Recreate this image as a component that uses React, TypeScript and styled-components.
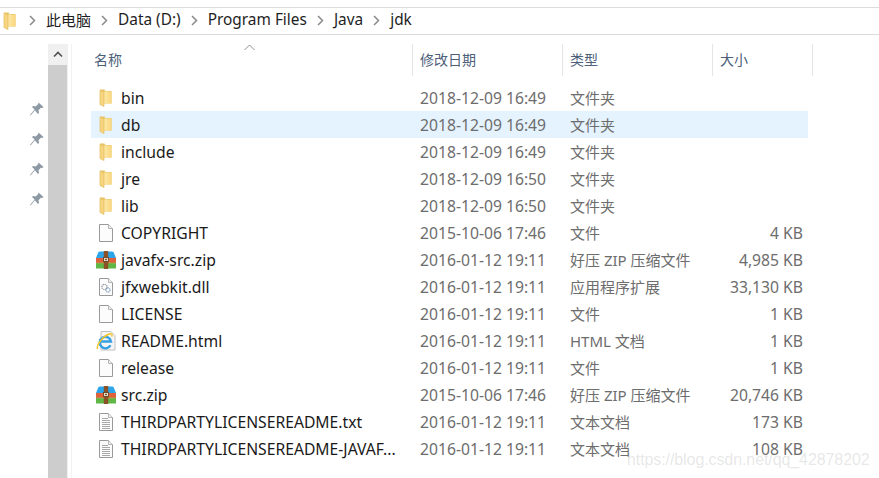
import React from "react";
import styled, { createGlobalStyle } from "styled-components";

const Global = createGlobalStyle`
  html, body { margin: 0; padding: 0; background: #fff; }
  body { width: 879px; height: 478px; overflow: hidden; font-family: "Noto Sans", "Noto Sans CJK SC", sans-serif; }
`;

const Page = styled.div`
  position: relative;
  width: 879px;
  height: 478px;
  padding-top: 7px;
  box-sizing: border-box;
  display: flex;
  flex-direction: column;
  overflow: hidden;
`;

const AddressBar = styled.div`
  height: 28px;
  flex: none;
  box-sizing: border-box;
  border-top: 1px solid #dcdcdc;
  border-bottom: 1px solid #dcdcdc;
  display: flex;
  align-items: center;
  padding: 0 0 2px 3px;
  font-size: 15px;
  color: #1e1e1e;
`;

const CrumbText = styled.span<{ $latin: boolean }>`
  white-space: nowrap;
  line-height: 20px;
  font-size: ${(p) => (p.$latin ? "15.4px" : "15px")};
`;

const RootIcon = styled.span`
  display: flex;
  margin: 2px 2px 0 0;
`;

const Separator = styled.span`
  display: flex;
  margin: 1px 10px 0;
`;

const Main = styled.div`
  flex: 1;
  display: flex;
  padding-top: 9px;
  min-height: 0;
`;

const PinColumn = styled.div`
  width: 48px;
  flex: none;
  display: flex;
  flex-direction: column;
  align-items: flex-end;
  gap: 14px;
  padding: 57px 3px 0 0;
  box-sizing: border-box;
`;

const Scrollbar = styled.div`
  width: 20px;
  flex: none;
  display: flex;
  flex-direction: column;
  background: #f0f0f0;
`;

const ScrollUp = styled.div`
  height: 21px;
  flex: none;
  display: flex;
  align-items: center;
  justify-content: center;
  background: #f0f0f0;
`;

const ScrollThumb = styled.div`
  flex: 1;
  background: #cdcdcd;
  margin-right: 1px;
`;

const Pane = styled.div`
  flex: 1;
  position: relative;
  border-left: 1px solid #f2f2f2;
  margin-left: 3px;
`;

const SortArrow = styled.svg`
  position: absolute;
  left: 172px;
  top: 0;
`;

const Header = styled.div`
  height: 32px;
  display: grid;
  grid-template-columns: 340px 150px 150px 100px;
  margin-left: 1px;
  margin-bottom: 8px;
  font-size: 14px;
  color: #4c607a;
`;

const HeaderCell = styled.div<{ $first?: boolean }>`
  display: flex;
  align-items: center;
  padding-left: ${(p) => (p.$first ? "21px" : "7px")};
  border-right: 1px solid #e5e5e5;
  box-sizing: border-box;
  line-height: 1;
`;

const Rows = styled.div`
  display: flex;
  flex-direction: column;
  width: 717px;
  margin-left: 19px;
`;

const Row = styled.div<{ $selected?: boolean }>`
  height: 27px;
  display: grid;
  grid-template-columns: 329px 150px 142px 96px;
  align-items: center;
  font-size: 15.7px;
  color: #6d6d6d;
  background: ${(p) => (p.$selected ? "#e5f3ff" : "transparent")};
  white-space: nowrap;
`;

const NameCell = styled.div`
  display: flex;
  align-items: center;
  color: #1a1a1a;
  padding-left: 5px;
  height: 100%;
`;

const IconSlot = styled.span`
  width: 20px;
  height: 20px;
  flex: none;
  margin-right: 5px;
  display: flex;
  align-items: center;
  justify-content: center;
`;

const DateCell = styled.div`
  font-size: 15.7px;
`;

const TypeCell = styled.div`
  font-size: 15px;
`;

const SizeCell = styled.div`
  text-align: right;
  padding-right: 5px;
`;

const Watermark = styled.div`
  position: absolute;
  left: 627px;
  top: 451px;
  font-family: "Liberation Sans", sans-serif;
  font-size: 16px;
  letter-spacing: -0.09px;
  color: rgba(150, 150, 150, 0.24);
  white-space: nowrap;
`;

const Folder = () => (
  <svg width="14" height="18" viewBox="0 0 14 18">
    <defs>
      <linearGradient id="fb" x1="0" y1="0" x2="1" y2="0">
        <stop offset="0" stopColor="#fde9a8" />
        <stop offset="1" stopColor="#f8d67c" />
      </linearGradient>
    </defs>
    <path d="M1 .5h4.5l1 1.5H12.5v12.5H1z" fill="#e8c468" />
    <path d="M5 2.5h7.5v12H5z" fill="url(#fb)" />
    <path d="M1 1 L5 3 V17.5 L1 15.5z" fill="#f6d57e" stroke="#e3bd5e" strokeWidth=".7" />
  </svg>
);

const BlankFile = ({ lines, gear }: { lines?: boolean; gear?: boolean }) => (
  <svg width="16" height="20" viewBox="0 0 16 20">
    <path d="M1.5 1.5h9l4 4v13h-13z" fill="#fcfcfc" stroke="#9a9a9a" />
    <path d="M10.5 1.5v4h4" fill="#efefef" stroke="#b4b4b4" />
    {lines && (
      <path d="M4 6.5h6M4 8.5h8M4 10.5h8M4 12.5h8M4 14.5h8M4 16.5h8" stroke="#a8a8a8" strokeWidth="1" fill="none" />
    )}
    {gear && (
      <g fill="none">
        <circle cx="6.5" cy="10" r="2.6" stroke="#9aa0a8" strokeWidth="1.3" strokeDasharray="1.4 .6" />
        <circle cx="10" cy="13" r="2.1" stroke="#7f9fc4" strokeWidth="1.2" strokeDasharray="1.2 .5" />
      </g>
    )}
  </svg>
);

const ZipIcon = () => (
  <svg width="20" height="18" viewBox="0 0 20 18" style={{ flex: "none" }}>
    <path d="M0 7 L2.5 1 Q3 .5 4 .5H16Q17 .5 17.5 1L20 7z" fill="#2ba4ea" />
    <rect x="0" y="7" width="20" height="5" fill="#e0603c" />
    <rect x="0" y="12" width="20" height="5.5" fill="#5fb846" />
    <rect x="0" y="11.5" width="20" height="1" fill="#a9a24a" />
    <rect x="7.8" y="0" width="4.4" height="18" fill="#8a5226" />
    <rect x="7.5" y="6.5" width="5" height="4" fill="#eadfc8" stroke="#5c3a1a" strokeWidth=".8" />
    <rect x="9.2" y="7.8" width="1.6" height="1.4" fill="#5c3a1a" />
  </svg>
);

const IeIcon = () => (
  <svg width="20" height="20" viewBox="0 0 20 20" style={{ flex: "none" }}>
    <path d="M5 .5h10l4 4v14.5H5z" fill="#f5f5f5" stroke="#c0c0c0" />
    <path d="M14.5 14.2A5.7 5.7 0 1 1 15 10.5H4.5" fill="none" stroke="#35a0e4" strokeWidth="2.4" />
    <path d="M1.8 18C-.5 15 6 6 13 3c2.5-1 3.5.3 2.8 2.5" fill="none" stroke="#f3c52f" strokeWidth="1.5" />
  </svg>
);

const Pin = () => (
  <svg width="16" height="16" viewBox="0 0 16 16">
    <path d="M9.5 1.5l5 4.6-1.3 1-1.3-.4-2.4 2.6.5 2.6-1.1 1.1L5.9 9.3 1.6 14.6 1 14l4.6-5.4L3 6l1.1-1.1 2.6.5L9.2 3z" fill="#8d99a4" />
  </svg>
);

const Chevron = () => (
  <svg width="7" height="11" viewBox="0 0 7 11">
    <path d="M1 1l4.5 4.5L1 10" fill="none" stroke="#8a8a8a" strokeWidth="1.5" />
  </svg>
);

type Kind = "folder" | "file" | "zip" | "dll" | "ie" | "txt";
const files: { n: string; d: string; t: string; s?: string; k: Kind; sel?: boolean }[] = [
  { n: "bin", d: "2018-12-09 16:49", t: "文件夹", k: "folder" },
  { n: "db", d: "2018-12-09 16:49", t: "文件夹", k: "folder", sel: true },
  { n: "include", d: "2018-12-09 16:49", t: "文件夹", k: "folder" },
  { n: "jre", d: "2018-12-09 16:50", t: "文件夹", k: "folder" },
  { n: "lib", d: "2018-12-09 16:50", t: "文件夹", k: "folder" },
  { n: "COPYRIGHT", d: "2015-10-06 17:46", t: "文件", s: "4 KB", k: "file" },
  { n: "javafx-src.zip", d: "2016-01-12 19:11", t: "好压 ZIP 压缩文件", s: "4,985 KB", k: "zip" },
  { n: "jfxwebkit.dll", d: "2016-01-12 19:11", t: "应用程序扩展", s: "33,130 KB", k: "dll" },
  { n: "LICENSE", d: "2016-01-12 19:11", t: "文件", s: "1 KB", k: "file" },
  { n: "README.html", d: "2016-01-12 19:11", t: "HTML 文档", s: "1 KB", k: "ie" },
  { n: "release", d: "2016-01-12 19:11", t: "文件", s: "1 KB", k: "file" },
  { n: "src.zip", d: "2015-10-06 17:46", t: "好压 ZIP 压缩文件", s: "20,746 KB", k: "zip" },
  { n: "THIRDPARTYLICENSEREADME.txt", d: "2016-01-12 19:11", t: "文本文档", s: "173 KB", k: "txt" },
  { n: "THIRDPARTYLICENSEREADME-JAVAF...", d: "2016-01-12 19:11", t: "文本文档", s: "108 KB", k: "txt" },
];

const icon = (k: Kind) => {
  switch (k) {
    case "folder": return <Folder />;
    case "file": return <BlankFile />;
    case "dll": return <BlankFile gear />;
    case "txt": return <BlankFile lines />;
    case "zip": return <ZipIcon />;
    case "ie": return <IeIcon />;
  }
};

export default function App() {
  return (
    <Page>
      <Global />
      <AddressBar>
        <RootIcon><Folder /></RootIcon>
        {["此电脑", "Data (D:)", "Program Files", "Java", "jdk"].map((c) => (
          <React.Fragment key={c}>
            <Separator><Chevron /></Separator>
            <CrumbText $latin={c !== "此电脑"}>{c}</CrumbText>
          </React.Fragment>
        ))}
      </AddressBar>
      <Main>
        <PinColumn>
          <Pin /><Pin /><Pin /><Pin />
        </PinColumn>
        <Scrollbar>
          <ScrollUp>
            <svg width="10" height="7" viewBox="0 0 10 7">
              <path d="M1 5.5l4-4 4 4" fill="none" stroke="#505050" strokeWidth="1.6" />
            </svg>
          </ScrollUp>
          <ScrollThumb />
        </Scrollbar>
        <Pane>
          <SortArrow width="11" height="7" viewBox="0 0 11 7">
            <path d="M.5 6L5.5 1l5 5" fill="none" stroke="#8f8f8f" />
          </SortArrow>
          <Header>
            <HeaderCell $first>名称</HeaderCell>
            <HeaderCell>修改日期</HeaderCell>
            <HeaderCell>类型</HeaderCell>
            <HeaderCell>大小</HeaderCell>
          </Header>
          <Rows>
            {files.map((f) => (
              <Row key={f.n} $selected={f.sel}>
                <NameCell>
                  <IconSlot>{icon(f.k)}</IconSlot>
                  {f.n}
                </NameCell>
                <DateCell>{f.d}</DateCell>
                <TypeCell>{f.t}</TypeCell>
                <SizeCell>{f.s}</SizeCell>
              </Row>
            ))}
          </Rows>
        </Pane>
      </Main>
      <Watermark>https://blog.csdn.net/qq_42878202</Watermark>
    </Page>
  );
}
